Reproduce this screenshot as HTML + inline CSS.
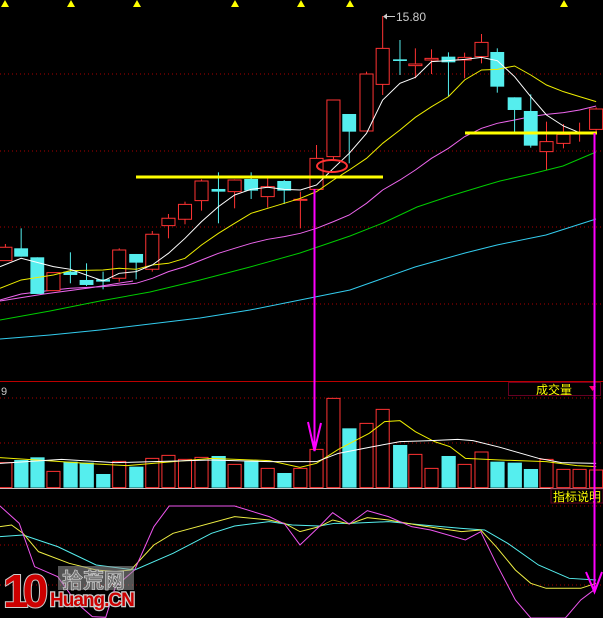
<!DOCTYPE html>
<html><head><meta charset="utf-8">
<style>
html,body{margin:0;padding:0;background:#000;width:603px;height:618px;overflow:hidden}
svg{display:block}
.n{vector-effect:non-scaling-stroke}
</style></head>
<body>
<svg id="s" width="603" height="618" viewBox="0 0 603 618" xmlns="http://www.w3.org/2000/svg">
<rect width="603" height="618" fill="#000"/>
<g stroke="#a00" stroke-width="1" stroke-dasharray="1,3">
<line x1="0" y1="74" x2="603" y2="74"/>
<line x1="0" y1="151" x2="603" y2="151"/>
<line x1="0" y1="227" x2="603" y2="227"/>
<line x1="0" y1="304" x2="603" y2="304"/>
<line x1="0" y1="398" x2="603" y2="398"/>
<line x1="0" y1="443" x2="603" y2="443"/>
<line x1="0" y1="506" x2="603" y2="506"/>
<line x1="0" y1="545" x2="603" y2="545"/>
<line x1="0" y1="585" x2="603" y2="585"/>
</g>
<line x1="0" y1="381.5" x2="603" y2="381.5" stroke="#b00" stroke-width="1"/>
<line x1="0" y1="488.5" x2="603" y2="488.5" stroke="#ccc" stroke-width="1"/>
<g id="tri" fill="#ff0"></g>
<g id="main" transform="scale(0.3846,0.3333)"></g>
<g id="vol" transform="translate(0,370) scale(0.3846,0.3333)"></g>
<line x1="384" y1="16.5" x2="395" y2="16.5" stroke="#ccc"/>
<path d="M383 16.5 l4 -3 v6z" fill="#ccc"/>
<text x="396" y="21" font-family="Liberation Sans, sans-serif" font-size="12" fill="#ccc">15.80</text>
<text x="1" y="395" font-family="Liberation Sans, sans-serif" font-size="11" fill="#ccc">9</text>
<rect x="508.5" y="382.5" width="92" height="13" fill="#000" stroke="#602" />
<text x="536" y="394" font-family="Liberation Sans, 'Noto Sans CJK SC', sans-serif" font-size="12" fill="#ff0">成交量</text>
<path d="M589 386 h7 l-3.5 5z" fill="#f06"/>
<rect x="551" y="489" width="52" height="14" fill="#000" stroke="#602"/>
<text x="553" y="501" font-family="Liberation Sans, 'Noto Sans CJK SC', sans-serif" font-size="12" fill="#ff0">指标说明</text>
<rect x="58" y="566" width="76" height="24" fill="#999" opacity="0.55"/>
<text x="62" y="588" font-family="'Noto Sans CJK SC', sans-serif" font-size="21" font-weight="bold" fill="#777" stroke="#ddd" stroke-width="0.6">拾荒网</text>
<text x="3" y="607" font-family="Liberation Sans, sans-serif" font-size="46" font-weight="bold" fill="#c00" stroke="#ccc" stroke-width="2" paint-order="stroke" letter-spacing="-6">10</text>
<text x="50" y="606" font-family="Liberation Sans, sans-serif" font-size="19" font-weight="bold" fill="#c00" stroke="#ccc" stroke-width="2.5" paint-order="stroke" letter-spacing="-1">Huang.CN</text>
</svg>
<script>
var NS="http://www.w3.org/2000/svg";
function el(p,t,a){var e=document.createElementNS(NS,t);for(var k in a)e.setAttribute(k,a[k]);p.appendChild(e);return e;}
var tri=document.getElementById('tri');
[5,71,137,235,301,350,564].forEach(function(x){el(tri,'path',{d:'M'+(x-4)+' 7 L'+x+' 0 L'+(x+4)+' 7Z'});});
var M=document.getElementById('main'),V=document.getElementById('vol');
var X=[14,55,97,139,183,225,268,310,354,396,438,481,524,568,610,653,696,739,781,823,867,908,953,995,1040,1080,1122,1166,1208,1252,1293,1338,1380,1421,1465,1507,1550];
var C=[['r',742,782,732,782],['c',745,770,685,770],['c',772,882,772,882],['r',818,872,818,872],['c',815,825,757,850],['c',840,855,790,858],['c',838,845,815,868],['r',750,835,745,845],['c',762,788,762,838],['r',703,808,693,815],['r',655,677,642,715],['r',613,658,605,673],['r',543,602,538,632],['c',567,575,517,670],['r',540,575,538,625],['c',537,572,517,597],['r',560,590,527,623],['c',543,572,540,612],['r',598,600,575,685],['r',475,568,435,568],['r',300,470,300,480],['c',342,395,342,490],['r',222,393,215,393],['r',145,253,48,285],['c',178,183,120,225],['r',192,197,145,235],['r',175,180,148,222],['c',170,187,157,290],['r',172,180,158,235],['r',127,170,102,190],['c',156,260,145,278],['c',292,330,292,395],['c',333,437,283,443],['r',425,455,365,510],['r',403,430,372,445],['r',398,402,368,425],['r',327,388,322,395]];
function pl(g,pts,col,w){el(g,'polyline',{points:pts.map(function(p){return p.join(',')}).join(' '),fill:'none',stroke:col,'stroke-width':w||1,'class':'n'});}
var s=document.getElementById('s');
// long MAs in screen coords (full)
pl(s,[[0,320],[50,311],[100,301],[150,292],[200,280],[250,267],[300,253],[350,236],[383,223],[417,207],[450,196],[483,186],[500,181],[531,174],[563,166],[596,152]],'#0c0');
pl(s,[[0,339],[50,335],[100,330],[150,324],[200,318],[250,310],[300,300],[350,290],[415,267],[465,253],[497,245],[546,235],[596,219]],'#3ce');
pl(M,[[0,900],[55,882],[139,870],[183,865],[268,860],[310,855],[354,850],[396,835],[438,815],[481,800],[524,780],[568,760],[610,745],[653,730],[696,718],[739,710],[781,700],[823,685],[867,665],[908,645],[953,610],[995,570],[1040,540],[1080,510],[1122,475],[1166,445],[1208,410],[1252,385],[1293,370],[1338,360],[1380,350],[1421,343],[1465,338],[1507,330],[1550,318]],'#e6e');
el(s,'polyline',{points:'0,301 44,294 89,288 133,281',fill:'none',stroke:'#e6e'});
C.forEach(function(c,i){var x=X[i],col=c[0]=='r'?'#f33':'#5ee';
 el(M,'line',{x1:x,x2:x,y1:c[3],y2:c[4],stroke:col,'class':'n'});
 var h=Math.max(c[2]-c[1],3);
 if(c[0]=='r'){el(M,'rect',{x:x-17,y:c[1],width:34,height:h,fill:'#000',stroke:col,'class':'n'});}
 else el(M,'rect',{x:x-18,y:c[1],width:36,height:h,fill:col});
});
pl(M,[[0,865],[55,840],[139,825],[183,812],[268,810],[310,805],[354,808],[396,795],[438,790],[481,775],[524,735],[568,700],[610,670],[653,640],[696,625],[739,610],[781,595],[823,575],[867,540],[908,510],[953,475],[995,430],[1040,390],[1080,352],[1122,320],[1166,290],[1208,240],[1252,210],[1293,208],[1338,198],[1380,225],[1421,255],[1465,275],[1507,290],[1550,305]],'#ee0');
pl(M,[[0,800],[55,775],[139,800],[183,808],[268,843],[310,820],[354,815],[396,795],[438,760],[481,715],[524,665],[568,620],[610,585],[653,568],[696,562],[739,568],[781,570],[823,555],[867,505],[908,460],[953,400],[995,300],[1040,250],[1080,232],[1122,185],[1166,182],[1208,178],[1252,172],[1293,182],[1338,230],[1380,290],[1421,345],[1465,378],[1507,398],[1550,398]],'#fff');
var VT=[278,270,262,304,275,278,312,274,290,265,256,268,262,258,283,272,295,309,295,238,85,175,160,118,225,253,295,258,283,246,275,278,297,268,298,298,300];
VT.forEach(function(t,i){var x=X[i],r=C[i][0]=='r';
 if(r)el(V,'rect',{x:x-17,y:t,width:34,height:353-t,fill:'#000',stroke:'#f33','class':'n'});
 else el(V,'rect',{x:x-18,y:t,width:37,height:353-t,fill:'#5ee'});});
pl(V,[[0,263],[120,272],[250,282],[330,287],[420,278],[550,265],[700,272],[780,292],[823,280],[880,238],[960,190],[1000,155],[1040,152],[1080,185],[1130,215],[1170,230],[1210,265],[1300,270],[1420,275],[1500,287],[1550,290]],'#ee0');
pl(V,[[0,280],[160,268],[300,278],[550,270],[700,275],[823,275],[880,250],[960,232],[1040,215],[1120,212],[1190,208],[1230,212],[1300,232],[1400,265],[1460,278],[1550,280]],'#fff');
pl(V,[[0,500],[60,495],[150,530],[250,585],[350,600],[450,550],[550,490],[610,468],[700,455],[760,465],[830,468],[870,460],[908,460],[1010,455],[1100,465],[1200,475],[1260,480],[1320,520],[1400,585],[1480,625],[1550,630]],'#5ee');
pl(V,[[0,470],[30,465],[60,490],[100,545],[180,580],[250,600],[300,605],[340,600],[400,525],[450,490],[610,440],[700,450],[740,460],[780,485],[830,470],[865,450],[908,462],[955,443],[1010,450],[1100,468],[1200,485],[1250,480],[1290,530],[1340,600],[1380,640],[1420,655],[1510,655],[1550,640]],'#ee4');
pl(V,[[0,408],[50,460],[90,590],[150,620],[200,700],[240,740],[275,742],[300,650],[350,600],[400,470],[440,408],[610,408],[700,440],[740,462],[780,525],[830,470],[865,428],[908,462],[955,422],[1010,440],[1070,470],[1120,480],[1210,510],[1250,485],[1290,580],[1340,690],[1380,744],[1470,744],[1510,690],[1550,655]],'#e5e');
el(s,'line',{x1:136,y1:177,x2:383,y2:177,stroke:'#ff0','stroke-width':3});
el(s,'line',{x1:465,y1:133,x2:597,y2:133,stroke:'#ff0','stroke-width':3});
el(s,'ellipse',{cx:332,cy:166,rx:15,ry:6,fill:'none',stroke:'#f33','stroke-width':2});
el(s,'line',{x1:314.5,y1:189,x2:314.5,y2:451,stroke:'#f0f','stroke-width':2});
el(s,'path',{d:'M308 422 L314.5 451 L321 423',fill:'none',stroke:'#f0f','stroke-width':2});
el(s,'line',{x1:594.5,y1:133,x2:594.5,y2:590,stroke:'#f0f','stroke-width':2});
el(s,'path',{d:'M586 572 L594.5 592 L602 572',fill:'none',stroke:'#f0f','stroke-width':2});
</script>
</body></html>
